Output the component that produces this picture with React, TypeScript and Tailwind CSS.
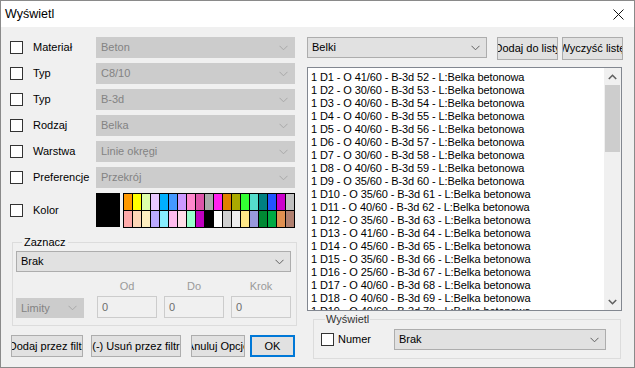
import React from "react";

const FONT = { fontFamily: '"Liberation Sans", Arial, sans-serif' };

function Chevron({ color }: { color: string }) {
  return (
    <svg width="9" height="6" viewBox="0 0 9 6" className="shrink-0">
      <path d="M0.5 0.8 L4.5 4.8 L8.5 0.8" fill="none" stroke={color} strokeWidth="1" />
    </svg>
  );
}

function Combo({
  text,
  disabled,
  className,
}: {
  text: string;
  disabled?: boolean;
  className: string;
}) {
  return (
    <div
      className={
        "flex items-center justify-between pl-[4px] pr-[6px] border " +
        (disabled
          ? "bg-[#cccccc] border-[#cccccc] text-[#838383] "
          : "bg-[#e1e1e1] border-[#adadad] text-black ") +
        className
      }
    >
      <span className="whitespace-nowrap">{text}</span>
      <Chevron color={disabled ? "#a8a8a8" : "#606060"} />
    </div>
  );
}

function Check() {
  return <div className="w-[13px] h-[13px] shrink-0 bg-white border border-[#333333]" />;
}

function Btn({ text, className }: { text: string; className: string }) {
  return (
    <div
      className={
        "flex items-center justify-center overflow-hidden whitespace-nowrap bg-[#e1e1e1] border border-[#adadad] text-black " +
        className
      }
    >
      <span>{text}</span>
    </div>
  );
}

const row1 = [
  "#ff9900", "#ffff00", "#ddffaa", "#e8c8ff", "#00b0ff", "#4499ff", "#cc99ff", "#ff88cc", "#dd55aa", "#aaaaaa",
  "#ff22ee", "#e08000", "#aaaa00", "#33ff33", "#55ddcc", "#008080", "#2255ff", "#cc00cc", "#c0c0c0",
];
const row2 = [
  "#ffaaaa", "#ffd8b8", "#ffeec0", "#bbaaff", "#88eeff", "#ffbbee", "#ffdde8", "#99ffcc", "#c000c0", "#000000",
  "#ffffff", "#d0d0d0", "#eeeeee", "#ffe888", "#9999dd", "#008833", "#00aa44", "#e09050", "#b08070",
];

const items: [string, string, string][] = [
  ["1", "41/60", "52"],
  ["2", "30/60", "53"],
  ["3", "40/60", "54"],
  ["4", "40/60", "55"],
  ["5", "40/60", "56"],
  ["6", "40/60", "57"],
  ["7", "30/60", "58"],
  ["8", "40/60", "59"],
  ["9", "35/60", "60"],
  ["10", "35/60", "61"],
  ["11", "40/60", "62"],
  ["12", "35/60", "63"],
  ["13", "41/60", "64"],
  ["14", "45/60", "65"],
  ["15", "35/60", "66"],
  ["16", "25/60", "67"],
  ["17", "40/60", "68"],
  ["18", "40/60", "69"],
  ["19", "40/60", "70"],
];

const fields: [string, string][] = [
  ["Materiał", "Beton"],
  ["Typ", "C8/10"],
  ["Typ", "B-3d"],
  ["Rodzaj", "Belka"],
  ["Warstwa", "Linie okręgi"],
  ["Preferencje", "Przekrój"],
];

export default function App() {
  return (
    <div
      className="w-[635px] h-[368px] flex flex-col border border-[#8a8a8a] bg-[#f0f0f0] text-[11px] text-black overflow-hidden"
      style={FONT}
    >
      {/* Title bar */}
      <div className="h-[26px] shrink-0 bg-white flex items-center justify-between pl-[4px] pr-[10px]">
        <span className="text-[12.5px] text-black">Wyświetl</span>
        <svg width="11" height="11" viewBox="0 0 11 11">
          <path d="M0.5 0.5 L10.5 10.5 M10.5 0.5 L0.5 10.5" stroke="#111" strokeWidth="1" />
        </svg>
      </div>

      <div className="flex flex-row flex-1">
        {/* Left column */}
        <div className="w-[306px] shrink-0 flex flex-col pt-[10px]">
          <div className="flex flex-col gap-[5px]">
            {fields.map(([label, value], i) => (
              <div key={i} className="flex items-center h-[21px]">
                <div className="ml-[9px]">
                  <Check />
                </div>
                <span className="ml-[10px] w-[63px]">{label}</span>
                <Combo text={value} disabled className="w-[199px] h-[21px]" />
              </div>
            ))}
            <div className="flex items-center h-[34px]">
              <div className="ml-[9px]">
                <Check />
              </div>
              <span className="ml-[10px] w-[63px]">Kolor</span>
              <div className="w-[24px] h-[34px] bg-black" />
              <div className="ml-[3px] grid grid-cols-[repeat(19,8px)] grid-rows-[16px_16px] gap-px bg-black p-px">
                {[...row1, ...row2].map((c, i) => (
                  <div key={i} style={{ backgroundColor: c }} />
                ))}
              </div>
            </div>
          </div>

          {/* Zaznacz group */}
          <fieldset className="ml-[11px] mt-[9px] w-[285px] border border-[#dcdcdc] pl-[3px] pr-[4px] pb-[7px]">
            <legend className="ml-[6px] px-[2px] leading-[13px]">Zaznacz</legend>
            <Combo text="Brak" className="mt-[2px] w-[275px] h-[21px]" />
            <div className="flex mt-[8px] h-[13px] leading-[13px] text-[#9a9a9a]">
              <div className="w-[81px]" />
              <div className="w-[60px] text-center">Od</div>
              <div className="w-[7px]" />
              <div className="w-[60px] text-center">Do</div>
              <div className="w-[7px]" />
              <div className="w-[60px] text-center">Krok</div>
            </div>
            <div className="flex items-end mt-[3px]">
              <Combo text="Limity" disabled className="w-[68px] h-[20px]" />
              <div className="ml-[13px] w-[60px] h-[22px] border border-[#cccccc] bg-[#f0f0f0] text-[#6d6d6d] flex items-center pl-[4px]">0</div>
              <div className="ml-[7px] w-[60px] h-[22px] border border-[#cccccc] bg-[#f0f0f0] text-[#6d6d6d] flex items-center pl-[4px]">0</div>
              <div className="ml-[7px] w-[60px] h-[22px] border border-[#cccccc] bg-[#f0f0f0] text-[#6d6d6d] flex items-center pl-[4px]">0</div>
            </div>
          </fieldset>

          {/* Bottom buttons */}
          <div className="flex mt-[9px] ml-[10px] h-[22px]">
            <Btn text="Dodaj przez filtr" className="w-[72px] h-[22px]" />
            <Btn text="(-) Usuń przez filtr" className="ml-[8px] w-[90px] h-[22px]" />
            <Btn text="Anuluj Opcje" className="ml-[10px] w-[54px] h-[22px]" />
            <div className="ml-[5px] w-[45px] h-[22px] flex items-center justify-center bg-[#e1e1e1] border-2 border-[#0078d7]">
              OK
            </div>
          </div>
        </div>

        {/* Right column */}
        <div className="flex flex-col pt-[10px]">
          <div className="flex items-start h-[22px]">
            <Combo text="Belki" className="w-[180px] h-[21px]" />
            <Btn text="Dodaj do listy" className="ml-[10px] w-[61px] h-[23px]" />
            <Btn text="Wyczyść listę" className="ml-[4px] w-[61px] h-[23px]" />
          </div>

          {/* Listbox */}
          <div className="mt-[8px] w-[315px] h-[244px] border border-[#828790] bg-white flex overflow-hidden">
            <div className="flex-1 pt-[3px] pl-[3px] overflow-hidden tracking-[-0.1px]">
              {items.map(([n, o, b]) => (
                <div key={n} className="h-[13px] leading-[13px] whitespace-nowrap">
                  {`1 D${n} - O ${o} - B-3d ${b} - L:Belka betonowa`}
                </div>
              ))}
            </div>
            <div className="w-[17px] bg-[#f0f0f0] flex flex-col">
              <div className="h-[17px] flex items-center justify-center">
                <svg width="9" height="6" viewBox="0 0 9 6">
                  <path d="M0.8 5 L4.5 1.3 L8.2 5" fill="none" stroke="#606060" strokeWidth="1.6" />
                </svg>
              </div>
              <div className="mx-[1px] h-[67px] bg-[#cdcdcd]" />
              <div className="flex-1" />
              <div className="h-[17px] flex items-center justify-center">
                <svg width="9" height="6" viewBox="0 0 9 6">
                  <path d="M0.8 1 L4.5 4.7 L8.2 1" fill="none" stroke="#606060" strokeWidth="1.6" />
                </svg>
              </div>
            </div>
          </div>

          {/* Wyświetl group */}
          <fieldset className="ml-[6px] mt-[2px] w-[308px] border border-[#dcdcdc] pl-[7px] pb-[8px]">
            <legend className="ml-[4px] px-[1px] leading-[13px] text-[#333333]">Wyświetl</legend>
            <div className="flex items-center mt-[3px] h-[21px]">
              <Check />
              <span className="ml-[4px] w-[56px]">Numer</span>
              <Combo text="Brak" className="w-[212px] h-[21px]" />
            </div>
          </fieldset>
        </div>
      </div>
    </div>
  );
}
